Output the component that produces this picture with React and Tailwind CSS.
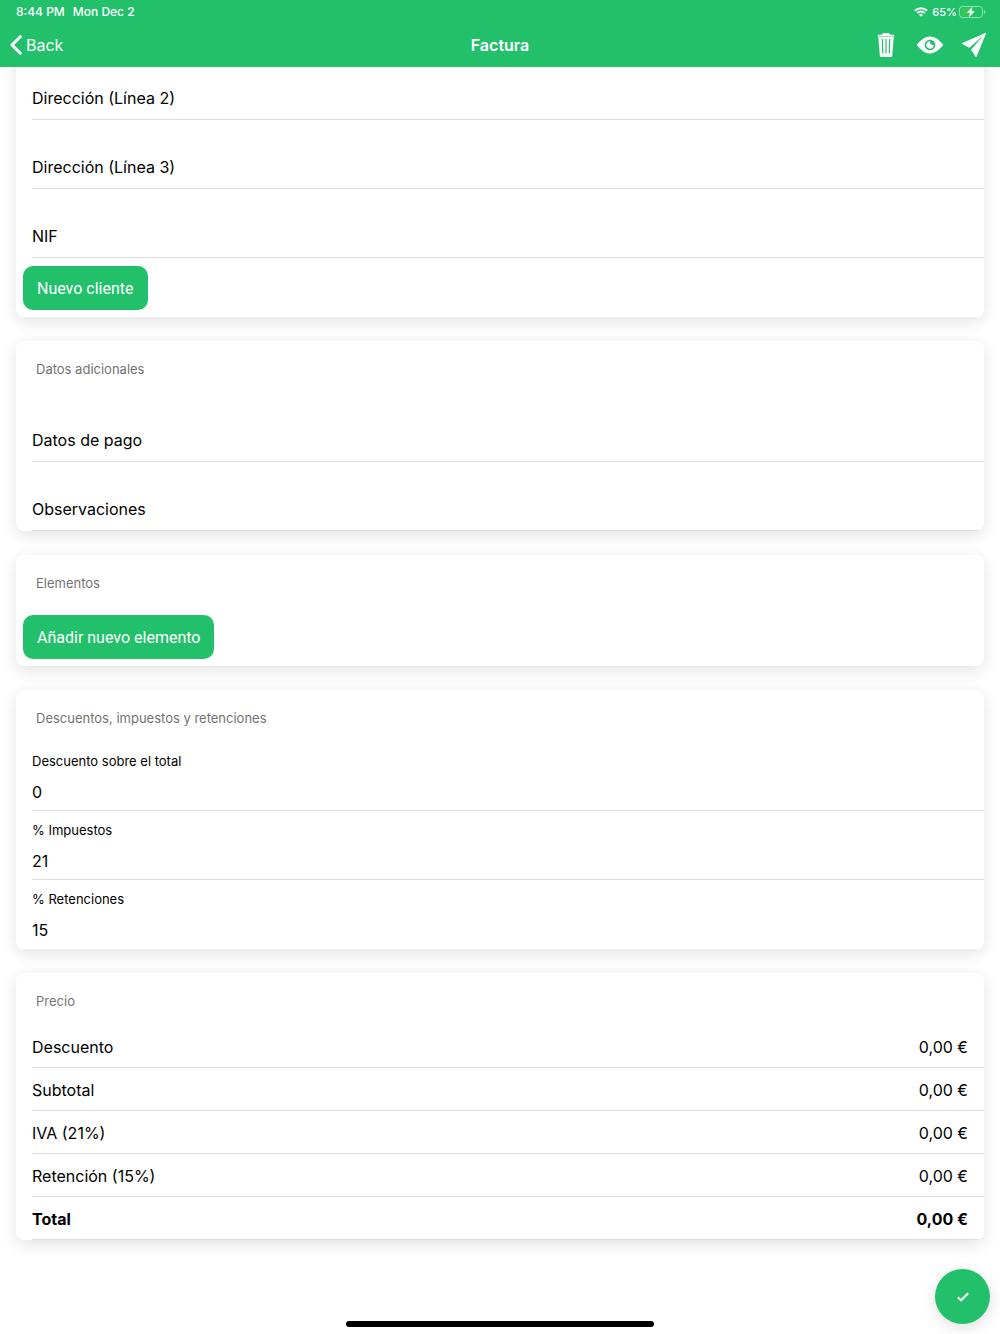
import React, { useState } from 'react'
import { IoIosTrash, IoIosEye, IoIosSend } from 'react-icons/io'

const CLIENT_FIELDS = [
  { key: 'address2', label: 'Dirección (Línea 2)' },
  { key: 'address3', label: 'Dirección (Línea 3)' },
  { key: 'nif',      label: 'NIF' },
]

const EXTRA_FIELDS = [
  { key: 'payment', label: 'Datos de pago' },
  { key: 'notes',   label: 'Observaciones' },
]

const TAX_FIELDS = [
  { key: 'discount',  label: 'Descuento sobre el total' },
  { key: 'tax',       label: '% Impuestos' },
  { key: 'retention', label: '% Retenciones' },
]

const PRICES = [
  { label: 'Descuento',       value: '0,00 €' },
  { label: 'Subtotal',        value: '0,00 €' },
  { label: 'IVA (21%)',       value: '0,00 €' },
  { label: 'Retención (15%)', value: '0,00 €' },
  { label: 'Total',           value: '0,00 €', bold: true },
]

function WifiIcon() {
  return (
    <svg viewBox="0 0 14 10" className="w-[14px] h-[10px]" fill="none" stroke="currentColor" strokeWidth="1.9" aria-hidden="true">
      <path d="M0.9 3.7a8.7 8.7 0 0 1 12.2 0" />
      <path d="M3.2 6.1a5.4 5.4 0 0 1 7.6 0" />
      <path d="M7 9.8 5 7.8a2.9 2.9 0 0 1 4 0z" fill="currentColor" stroke="none" />
    </svg>
  )
}

function BatteryIcon() {
  return (
    <svg viewBox="0 0 27 12" className="w-[27px] h-[12px]" aria-hidden="true">
      <rect x="0.5" y="0.5" width="23" height="11" rx="3" fill="none" stroke="#fff" strokeOpacity="0.5" />
      <path d="M4 2h10v8H4a2 2 0 0 1-2-2V4a2 2 0 0 1 2-2z" fill="#35c759" />
      <path d="M25 4v4c.8-.3 1.3-1.1 1.3-2S25.8 4.3 25 4z" fill="#fff" fillOpacity="0.5" />
      <path d="M13.5 0.8 7.8 6.8h3.4L9.8 11.4l6-6.2h-3.4z" fill="#fff" />
    </svg>
  )
}

function Card({ title, className = '', children }) {
  return (
    <section className={`mx-4 rounded-lg overflow-hidden bg-white shadow-[0_4px_16px_rgba(0,0,0,0.12)] ${className}`}>
      {title && <h2 className="h-[52px] pt-[6px] px-5 flex items-center text-[13px] text-[#737373]">{title}</h2>}
      {children}
    </section>
  )
}

// Label rests on top of the input until there is a value
function FloatingField({ id, label, value, onChange }) {
  return (
    <div className="ml-4 h-[69px] pt-[26px] grid border-b border-[#dedede]">
      <label
        htmlFor={id}
        className={`col-start-1 row-start-1 self-center text-base text-black pointer-events-none ${value ? 'invisible' : ''}`}>
        {label}
      </label>
      <input
        id={id}
        value={value}
        onChange={(e) => onChange(e.target.value)}
        className="col-start-1 row-start-1 w-full bg-transparent text-base text-black outline-none"
      />
    </div>
  )
}

function StackedField({ id, label, value, onChange }) {
  return (
    <div className="ml-4 h-[69px] pt-[10px] flex flex-col border-b border-[#dedede] last:border-transparent">
      <label htmlFor={id} className="text-[13px] leading-[18px] text-black">{label}</label>
      <input
        id={id}
        inputMode="decimal"
        value={value}
        onChange={(e) => onChange(e.target.value)}
        className="flex-1 mt-1 w-full bg-transparent text-base text-black outline-none"
      />
    </div>
  )
}

function ActionButton({ children }) {
  return (
    <button className="mx-[7px] mt-2 mb-[7px] h-11 px-[14px] pt-px rounded-[10px] bg-[#22c06b] font-['Roboto','Liberation_Sans',sans-serif] text-base text-white">
      {children}
    </button>
  )
}

export default function App() {
  const [form, setForm] = useState({
    address2: '', address3: '', nif: '', payment: '', notes: '',
    discount: '0', tax: '21', retention: '15',
  })

  const set = (key) => (val) => setForm((f) => ({ ...f, [key]: val }))

  return (
    <div className="min-h-screen bg-white font-['Inter','Liberation_Sans',sans-serif]">
      <header className="sticky top-0 z-10 bg-[#22c06b] text-white">
        <div className="h-6 pl-4 pr-[14px] flex items-center justify-between text-[11px] font-medium">
          <div className="flex gap-2 text-xs">
            <span>8:44 PM</span>
            <span>Mon Dec 2</span>
          </div>
          <div className="flex items-center gap-1">
            <WifiIcon />
            <span className="flex items-center gap-[2px]">65% <BatteryIcon /></span>
          </div>
        </div>
        <div className="h-[43px] px-[10px] pb-[2px] grid grid-cols-3 items-center">
          <a href="#back" className="flex items-center gap-1 text-base">
            <svg viewBox="0 0 12 20" className="w-3 h-5" fill="none" stroke="currentColor" strokeWidth="3" strokeLinecap="round" strokeLinejoin="round" aria-hidden="true">
              <path d="M10.3 1.7 2 10l8.3 8.3" />
            </svg>
            Back
          </a>
          <h1 className="text-center text-base font-semibold">Factura</h1>
          <div className="flex items-center justify-end gap-3">
            <button aria-label="Eliminar"><IoIosTrash className="w-8 h-8" /></button>
            <button aria-label="Vista previa" className="px-px"><IoIosEye className="w-[30px] h-[30px]" /></button>
            <button aria-label="Enviar"><IoIosSend className="w-8 h-8" /></button>
          </div>
        </div>
      </header>

      <main className="-mt-14 pb-20 flex flex-col gap-6">
        <Card className="pt-10">
          {CLIENT_FIELDS.map(({ key, label }) => (
            <FloatingField key={key} id={key} label={label} value={form[key]} onChange={set(key)} />
          ))}
          <div className="flex"><ActionButton>Nuevo cliente</ActionButton></div>
        </Card>

        <Card title="Datos adicionales">
          {EXTRA_FIELDS.map(({ key, label }) => (
            <FloatingField key={key} id={key} label={label} value={form[key]} onChange={set(key)} />
          ))}
        </Card>

        <Card title="Elementos">
          <div className="flex"><ActionButton>Añadir nuevo elemento</ActionButton></div>
        </Card>

        <Card title="Descuentos, impuestos y retenciones">
          {TAX_FIELDS.map(({ key, label }) => (
            <StackedField key={key} id={key} label={label} value={form[key]} onChange={set(key)} />
          ))}
        </Card>

        <Card title="Precio">
          <dl>
            {PRICES.map(({ label, value, bold }) => (
              <div
                key={label}
                className={`ml-4 pr-4 pt-[2px] h-[43px] flex items-center justify-between border-b border-[#dedede] text-base text-black ${bold ? 'font-bold' : ''}`}>
                <dt>{label}</dt>
                <dd>{value}</dd>
              </div>
            ))}
          </dl>
        </Card>
      </main>

      <button
        aria-label="Guardar"
        className="fixed right-[10px] bottom-[10px] w-[55px] h-[55px] rounded-full bg-[#22c06b] text-white flex items-center justify-center shadow-[0_4px_16px_rgba(0,0,0,0.12)]">
        <svg viewBox="0 0 12 10" className="w-3 h-[10px]" fill="none" stroke="currentColor" strokeWidth="2" aria-hidden="true">
          <path d="M0.8 5.2 4 8.3 11.2 1.2" />
        </svg>
      </button>

      {/* Home indicator */}
      <div className="fixed inset-x-0 bottom-[7px] flex justify-center pointer-events-none">
        <div className="w-[308px] h-[6px] rounded-full bg-black" />
      </div>
    </div>
  )
}
